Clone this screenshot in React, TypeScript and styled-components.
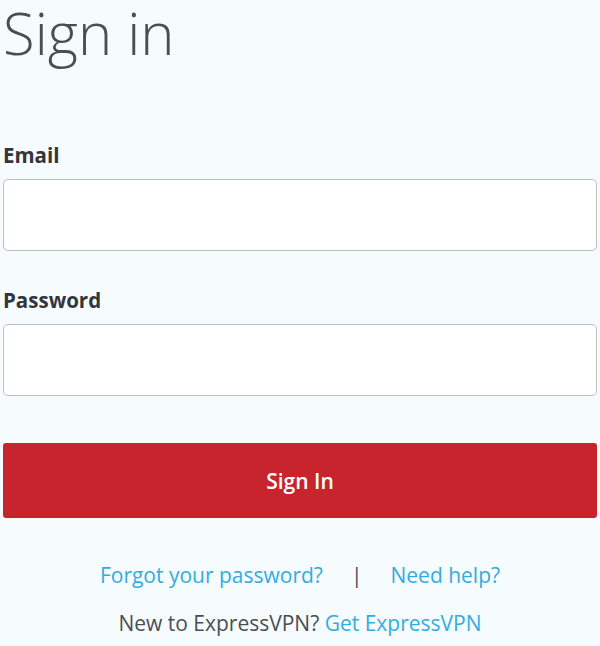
import * as React from "react";
import styled, { createGlobalStyle } from "styled-components";

const GlobalStyle = createGlobalStyle`
  html, body {
    margin: 0;
    padding: 0;
    background: #f6fbfe;
  }
  body {
    font-family: "Open Sans", Lato, sans-serif;
  }
`;

const App: React.FC = () => {
  return (
    <>
      <GlobalStyle />
      <StyledPage>
        <StyledTitle>Sign in</StyledTitle>
        <StyledForm onSubmit={(e) => e.preventDefault()}>
          <StyledField>
            <StyledLabel htmlFor="email">Email</StyledLabel>
            <StyledInput id="email" type="email" />
          </StyledField>
          <StyledField>
            <StyledLabel htmlFor="password">Password</StyledLabel>
            <StyledInput id="password" type="password" />
          </StyledField>
          <StyledButton type="submit">Sign In</StyledButton>
        </StyledForm>
        <StyledLinks>
          <StyledLink href="#">Forgot your password?</StyledLink>
          <StyledSeparator>|</StyledSeparator>
          <StyledLink href="#">Need help?</StyledLink>
        </StyledLinks>
        <StyledSignup>
          New to ExpressVPN? <StyledLink href="#">Get ExpressVPN</StyledLink>
        </StyledSignup>
      </StyledPage>
    </>
  );
};

export default App;

const StyledPage = styled.div`
  width: 594px;
  padding: 0 4px 0 3px;
  display: flex;
  flex-direction: column;
`;

const StyledTitle = styled.h1`
  margin: 0;
  font-size: 58px;
  line-height: 66px;
  font-weight: 300;
  color: #4a4e53;
`;

const StyledForm = styled.form`
  margin-top: 77px;
  display: flex;
  flex-direction: column;
`;

const StyledField = styled.div`
  display: flex;
  flex-direction: column;
  margin-bottom: 37px;
`;

const StyledLabel = styled.label`
  font-size: 20.5px;
  line-height: 24px;
  font-weight: 700;
  color: #333538;
  margin-bottom: 12px;
`;

const StyledInput = styled.input`
  box-sizing: border-box;
  height: 72px;
  width: 100%;
  border: 1px solid #bcbec0;
  border-radius: 5px;
  background: #ffffff;
  font-size: 20px;
  padding: 0 16px;
  outline: none;
`;

const StyledButton = styled.button`
  margin-top: 10px;
  height: 75px;
  width: 100%;
  border: none;
  border-radius: 3px;
  background: #c8242d;
  color: #ffffff;
  font-family: "Open Sans", Lato, sans-serif;
  font-size: 21px;
  font-weight: 600;
  cursor: pointer;
`;

const StyledLinks = styled.div`
  margin-top: 44px;
  display: flex;
  justify-content: center;
  align-items: center;
  gap: 28px;
  font-size: 21px;
  line-height: 26px;
`;

const StyledLink = styled.a`
  color: #34ace0;
  text-decoration: none;
`;

const StyledSeparator = styled.span`
  color: #4a4e53;
`;

const StyledSignup = styled.p`
  margin: 22px 0 0;
  text-align: center;
  font-size: 21px;
  line-height: 26px;
  color: #4a4e53;
`;
